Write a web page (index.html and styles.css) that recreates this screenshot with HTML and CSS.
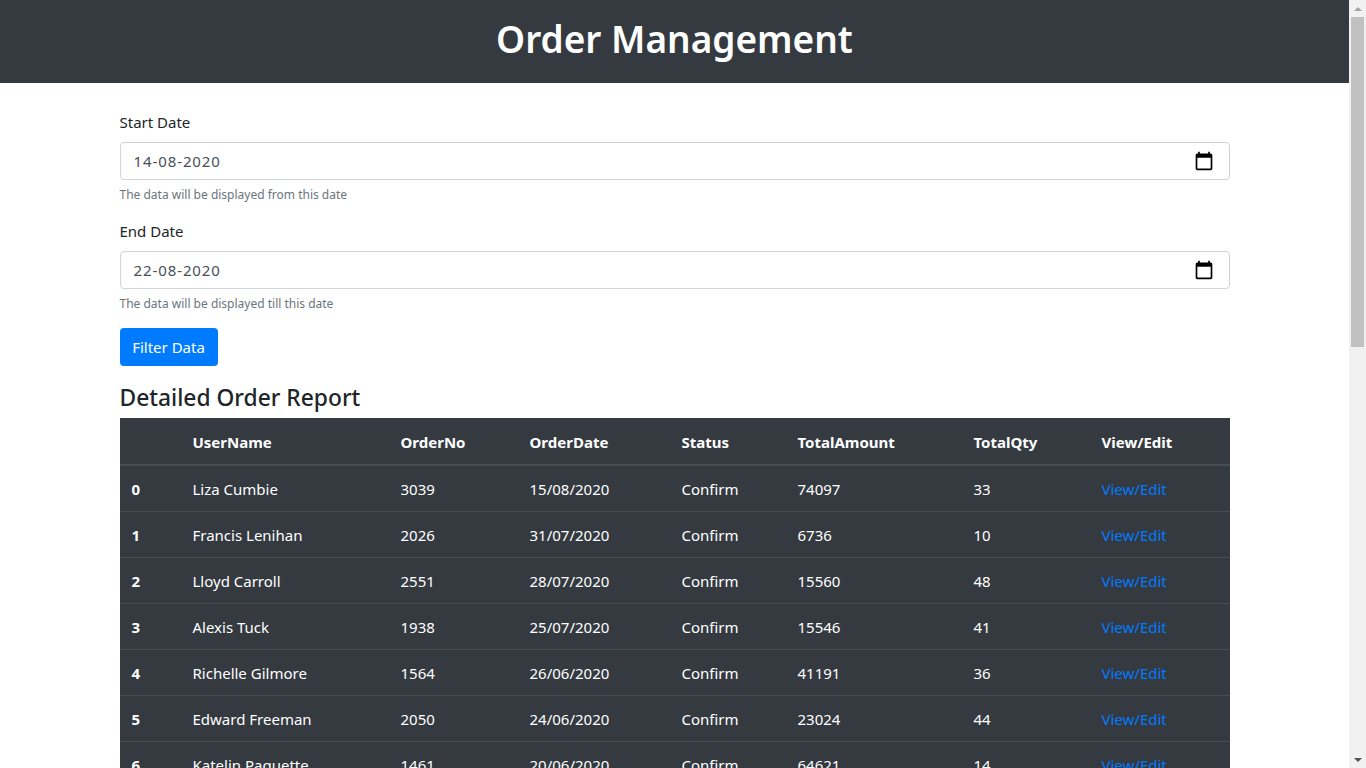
FILE: index.html
```html
<!DOCTYPE html>
<html>

<head>
    <title>Order Management</title>
    <link rel="stylesheet" href="styles.css">
</head>

<body>
    <div class="page">
        <main class="content">
            <header class="banner">
                <h1>Order Management</h1>
            </header>
            <div class="container">
                <form autocomplete="off">
                    <div class="form_group">
                        <label for="startDate">Start Date</label>
                        <div class="date_field">
                            <input type="text" id="startDate" value="14-08-2020">
                            <svg class="date_icon" viewBox="0 0 24 24">
                                <path d="M20 3h-1V1h-2v2H7V1H5v2H4c-1.1 0-2 .9-2 2v16c0 1.1.9 2 2 2h16c1.1 0 2-.9 2-2V5c0-1.1-.9-2-2-2zm0 18H4V8h16v13z"/>
                            </svg>
                        </div>
                        <small>The data will be displayed from this date</small>
                    </div>
                    <div class="form_group">
                        <label for="endDate">End Date</label>
                        <div class="date_field">
                            <input type="text" id="endDate" value="22-08-2020">
                            <svg class="date_icon" viewBox="0 0 24 24">
                                <path d="M20 3h-1V1h-2v2H7V1H5v2H4c-1.1 0-2 .9-2 2v16c0 1.1.9 2 2 2h16c1.1 0 2-.9 2-2V5c0-1.1-.9-2-2-2zm0 18H4V8h16v13z"/>
                            </svg>
                        </div>
                        <small>The data will be displayed till this date</small>
                    </div>
                    <button type="button" class="btn_filter">Filter Data</button>
                </form>

                <h4>Detailed Order Report</h4>
                <table class="list">
                    <thead>
                        <tr>
                            <th></th>
                            <th>UserName</th>
                            <th>OrderNo</th>
                            <th>OrderDate</th>
                            <th>Status</th>
                            <th>TotalAmount</th>
                            <th>TotalQty</th>
                            <th>View/Edit</th>
                        </tr>
                    </thead>
                    <tbody>
                        <tr>
                            <th>0</th>
                            <td>Liza Cumbie</td>
                            <td>3039</td>
                            <td>15/08/2020</td>
                            <td>Confirm</td>
                            <td>74097</td>
                            <td>33</td>
                            <td><a href="#">View/Edit</a></td>
                        </tr>
                        <tr>
                            <th>1</th>
                            <td>Francis Lenihan</td>
                            <td>2026</td>
                            <td>31/07/2020</td>
                            <td>Confirm</td>
                            <td>6736</td>
                            <td>10</td>
                            <td><a href="#">View/Edit</a></td>
                        </tr>
                        <tr>
                            <th>2</th>
                            <td>Lloyd Carroll</td>
                            <td>2551</td>
                            <td>28/07/2020</td>
                            <td>Confirm</td>
                            <td>15560</td>
                            <td>48</td>
                            <td><a href="#">View/Edit</a></td>
                        </tr>
                        <tr>
                            <th>3</th>
                            <td>Alexis Tuck</td>
                            <td>1938</td>
                            <td>25/07/2020</td>
                            <td>Confirm</td>
                            <td>15546</td>
                            <td>41</td>
                            <td><a href="#">View/Edit</a></td>
                        </tr>
                        <tr>
                            <th>4</th>
                            <td>Richelle Gilmore</td>
                            <td>1564</td>
                            <td>26/06/2020</td>
                            <td>Confirm</td>
                            <td>41191</td>
                            <td>36</td>
                            <td><a href="#">View/Edit</a></td>
                        </tr>
                        <tr>
                            <th>5</th>
                            <td>Edward Freeman</td>
                            <td>2050</td>
                            <td>24/06/2020</td>
                            <td>Confirm</td>
                            <td>23024</td>
                            <td>44</td>
                            <td><a href="#">View/Edit</a></td>
                        </tr>
                        <tr>
                            <th>6</th>
                            <td>Katelin Paquette</td>
                            <td>1461</td>
                            <td>20/06/2020</td>
                            <td>Confirm</td>
                            <td>64621</td>
                            <td>14</td>
                            <td><a href="#">View/Edit</a></td>
                        </tr>
                    </tbody>
                </table>
            </div>
        </main>
        <div class="scrollbar">
            <span class="arrow_up"></span>
            <div class="scrollbar_track">
                <div class="scrollbar_thumb"></div>
            </div>
            <span class="arrow_down"></span>
        </div>
    </div>
</body>

</html>
```

FILE: styles.css
```css
html,
body {
    height: 100%;
    margin: 0;
    overflow: hidden;
}

body {
    font-family: "Noto Sans", "Liberation Sans", sans-serif;
    font-size: 16px;
    line-height: 24px;
    color: #212529;
    background: #fff;
}

.page {
    display: flex;
    height: 768px;
    overflow: hidden;
}

.content {
    flex: 1;
    min-width: 0;
    overflow: hidden;
}

.banner {
    height: 83px;
    box-sizing: border-box;
    padding-bottom: 6px;
    display: flex;
    align-items: center;
    justify-content: center;
    background: #343a40;
}

h1 {
    margin: 0;
    color: #fff;
    font-size: 37px;
    font-weight: 600;
    line-height: 48px;
}

.container {
    width: 1110px;
    margin: 0 auto;
    padding-top: 27px;
}

.form_group {
    margin-bottom: 15px;
}

label {
    display: block;
    margin-bottom: 8px;
    font-size: 15px;
}

.date_field {
    position: relative;
}

input[type="text"] {
    display: block;
    width: 100%;
    height: 38px;
    box-sizing: border-box;
    padding: 6px 13px;
    border: 1px solid #ced4da;
    border-radius: 4px;
    font-family: inherit;
    font-size: 15px;
    letter-spacing: 0.9px;
    color: #495057;
    outline: none;
}

.date_icon {
    position: absolute;
    top: 9px;
    right: 16px;
    width: 20px;
    height: 20px;
}

small {
    display: block;
    margin-top: 6px;
    font-size: 12px;
    line-height: 18px;
    color: #6c757d;
}

.btn_filter {
    display: block;
    width: 98px;
    height: 38px;
    padding: 0;
    border: none;
    border-radius: 4px;
    background: #007bff;
    color: #fff;
    font-family: inherit;
    font-size: 15px;
    cursor: pointer;
}

h4 {
    margin: 18px 0 6px;
    height: 28px;
    font-size: 22.8px;
    font-weight: 500;
    line-height: 28px;
}

table.list {
    width: 100%;
    table-layout: fixed;
    border-collapse: collapse;
    background: #343a40;
    color: #fff;
    font-size: 15px;
}

table.list th,
table.list td {
    box-sizing: border-box;
    padding: 12px 12px 10px;
    line-height: 23px;
    text-align: left;
    border-top: 1px solid #454d55;
}

table.list th {
    font-weight: 700;
}

table.list thead th {
    padding: 13px 12px 10px;
    border-top: none;
    border-bottom: 2px solid #454d55;
}

table.list th:nth-child(1) { width: 61px; }
table.list th:nth-child(2) { width: 208px; }
table.list th:nth-child(3) { width: 129px; }
table.list th:nth-child(4) { width: 152px; }
table.list th:nth-child(5) { width: 116px; }
table.list th:nth-child(6) { width: 176px; }
table.list th:nth-child(7) { width: 128px; }

a {
    color: #007bff;
    text-decoration: none;
}

.scrollbar {
    flex: none;
    width: 17px;
    display: flex;
    flex-direction: column;
    background: #f1f1f1;
}

.scrollbar_track {
    flex: 1;
    padding: 0 2px;
}

.scrollbar_thumb {
    height: 330px;
    background: #c1c1c1;
}

.arrow_up,
.arrow_down {
    flex: none;
    height: 17px;
    display: flex;
    align-items: center;
    justify-content: center;
}

.arrow_up::before,
.arrow_down::before {
    content: "";
    border-left: 4px solid transparent;
    border-right: 4px solid transparent;
}

.arrow_up::before {
    border-bottom: 4px solid #a3a3a3;
}

.arrow_down::before {
    border-top: 4px solid #505050;
}
```
